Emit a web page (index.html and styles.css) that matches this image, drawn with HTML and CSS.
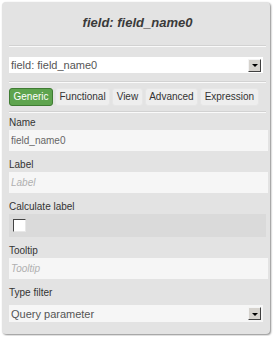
FILE: index.html
```html
<!DOCTYPE html>
<html lang="en">
<head>
  <meta charset="UTF-8" />
  <title>field: field_name0</title>
  <link rel="stylesheet" href="styles.css">
</head>
<body>
  <div class="panel">
    <div class="title">field: field_name0</div>
    <div class="rule"></div>

    <div class="select top-select">
      <span class="select-text">field: field_name0</span>
      <span class="arrow"></span>
    </div>
    <div class="rule rule-select"></div>

    <div class="tabs">
      <span class="tab active">Generic</span>
      <span class="tab">Functional</span>
      <span class="tab">View</span>
      <span class="tab">Advanced</span>
      <span class="tab">Expression</span>
    </div>
    <div class="rule rule-tabs"></div>

    <div class="form">
      <label class="lbl first">Name</label>
      <input class="field" type="text" value="field_name0" />

      <label class="lbl">Label</label>
      <input class="field" type="text" placeholder="Label" />

      <label class="lbl">Calculate label</label>
      <div class="check-row"><span class="checkbox"></span></div>

      <label class="lbl">Tooltip</label>
      <input class="field" type="text" placeholder="Tooltip" />

      <label class="lbl">Type filter</label>
      <div class="select filter-select">
        <span class="select-text">Query parameter</span>
        <span class="arrow"></span>
      </div>
    </div>
  </div>
</body>
</html>
```

FILE: styles.css
```css
body {
  margin: 0;
  background: #fff;
  font-family: 'Liberation Sans', Arial, sans-serif;
}
.panel {
  margin: 2px;
  width: 261px;
  height: 332px;
  padding: 0 0 0 7px;
  background: #e3e3e3;
  border-radius: 4px;
  box-shadow: 1px 1px 2px #8a8a8a;
}
.title {
  height: 43px;
  line-height: 42px;
  text-align: center;
  font-weight: bold;
  font-style: italic;
  font-size: 13px;
  color: #3a3a3a;
  padding-right: 4px;
}
.rule {
  width: 257px;
  border-top: 1px solid #d2d2d2;
  border-bottom: 1px solid #fafafa;
}
.select {
  display: flex;
  align-items: center;
  justify-content: space-between;
  width: 254px;
  height: 16px;
  background: #fff;
  font-size: 11px;
  color: #555;
}
.top-select {
  margin-top: 10px;
}
.select-text {
  padding-left: 2px;
}
.arrow {
  box-sizing: border-box;
  width: 13px;
  height: 13px;
  margin-right: 2px;
  background: #d6d3ce;
  border: 1px solid;
  border-color: #f4f4f4 #404040 #404040 #f4f4f4;
  display: flex;
  align-items: center;
  justify-content: center;
}
.arrow::after {
  content: '';
  border-left: 3px solid transparent;
  border-right: 3px solid transparent;
  border-top: 3px solid #000;
  margin-top: 1px;
}
.rule-select {
  margin-top: 8px;
}
.tabs {
  display: flex;
  gap: 2px;
  margin-top: 5px;
}
.tab {
  height: 16px;
  line-height: 16px;
  padding: 0 3.5px;
  font-size: 10px;
  color: #333;
  background: #eeeeee;
  border: 1px solid #e6e6e6;
  border-radius: 3px;
}
.tab.active {
  background: #5ea44e;
  border-color: #3f7c33;
  color: #fff;
}
.rule-tabs {
  margin-top: 5px;
}
.form {
  display: flex;
  flex-direction: column;
}
.lbl {
  display: block;
  padding-top: 7px;
  line-height: 14px;
  font-size: 10px;
  color: #333;
}
.lbl.first {
  padding-top: 3px;
}
.field {
  box-sizing: border-box;
  width: 259px;
  height: 21px;
  margin: 0;
  padding: 0 2px;
  border: none;
  outline: none;
  background: #f6f6f6;
  font-family: 'Liberation Sans', Arial, sans-serif;
  font-size: 10px;
  color: #666;
}
.field::placeholder {
  color: #b0b0b0;
  font-style: italic;
}
.check-row {
  width: 257px;
  height: 23px;
  background: #dadada;
  display: flex;
  align-items: center;
}
.checkbox {
  box-sizing: border-box;
  width: 13px;
  height: 13px;
  margin-left: 4px;
  background: #fff;
  border: 1px solid;
  border-color: #444 #e8e8e8 #e8e8e8 #444;
}
.filter-select {
  margin-top: 5px;
  height: 17px;
  background: #f6f6f6;
}
```
